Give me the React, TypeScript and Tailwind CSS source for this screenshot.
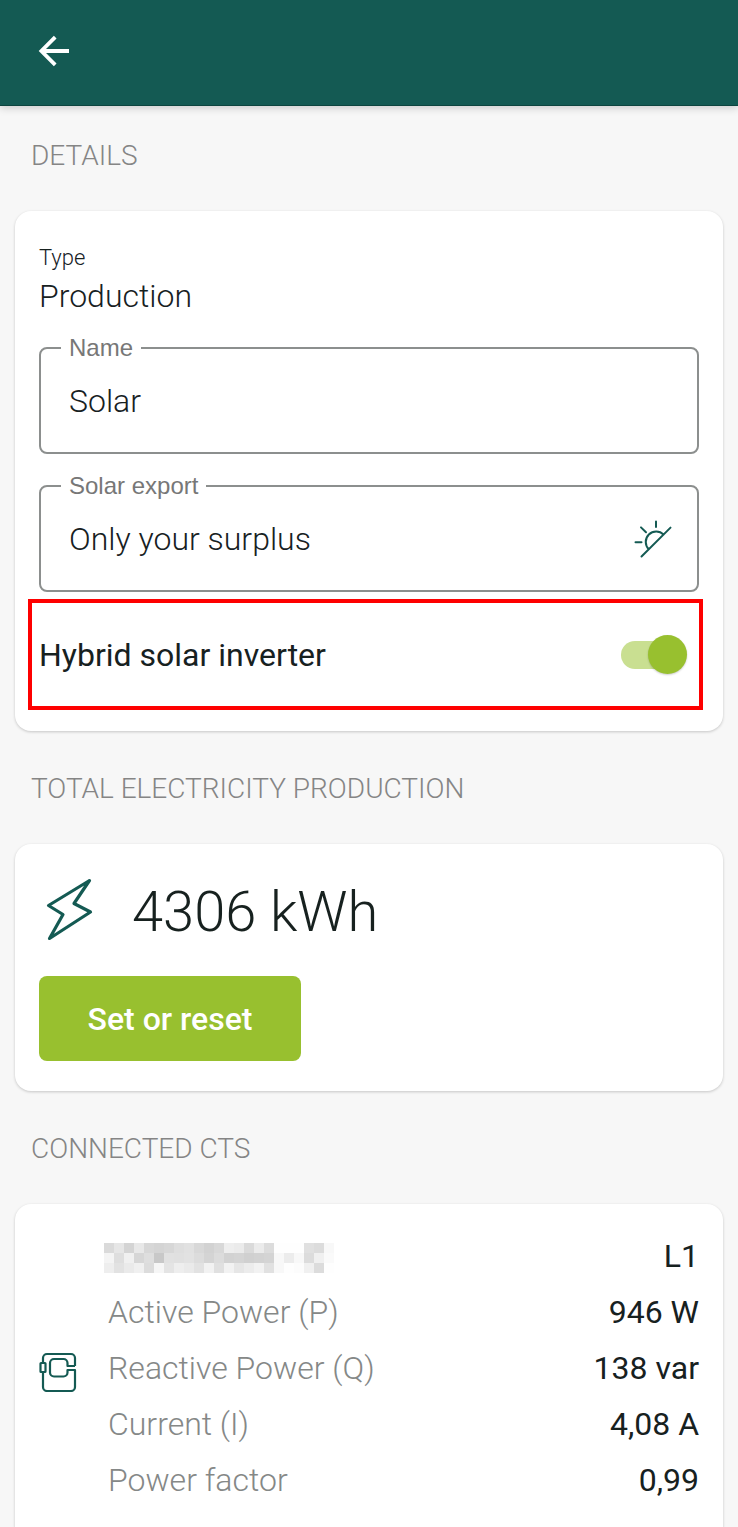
import React, { useState } from 'react';

interface Reading {
    label: string;
    value: string;
}

const readings: Reading[] = [
    { label: 'Active Power (P)', value: '946 W' },
    { label: 'Reactive Power (Q)', value: '138 var' },
    { label: 'Current (I)', value: '4,08 A' },
    { label: 'Power factor', value: '0,99' },
];

// Grey levels of the masked serial number, one row of cells per line
const maskedSerial = [
    [218, 230, 212, 232, 215, 212, 215, 222, 225, 216, 210, 216, 238, 235, 218, 235, 220, 254, 254, 254, 224, 220, 248],
    [244, 222, 240, 214, 222, 200, 225, 224, 226, 220, 212, 220, 210, 212, 208, 210, 212, 248, 236, 248, 220, 240, 250],
    [238, 226, 234, 240, 220, 246, 228, 238, 234, 226, 242, 224, 242, 230, 236, 242, 225, 248, 254, 252, 240, 220, 254],
];

function BackIcon() {
    return (
        <svg className="w-8 h-8" viewBox="0 0 32 32" fill="none" stroke="currentColor" strokeWidth="3.8">
            <path d="M31 16H4M17.2 2.2 3.4 16l13.8 13.8" />
        </svg>
    );
}

function SurplusIcon() {
    return (
        <svg className="w-10 h-10" viewBox="0 0 40 40" fill="none" stroke="currentColor" strokeWidth="2" strokeLinecap="round">
            <path d="M8.5 37.5 37.5 8.6M15.8 30.3A9.8 9.8 0 0 1 30.6 15.6M2.5 23.2h6M8 8.4l5 4.8M23 2.6v5.5" />
        </svg>
    );
}

function BoltIcon() {
    return (
        <svg className="w-12 h-16" viewBox="0 0 48 64" fill="none" stroke="currentColor" strokeWidth="3.2" strokeLinejoin="round">
            <path d="M43.5 2.5 2.5 27.5l14.500 9L3.5 60.5l41-26.5-16.5-8.5z" />
        </svg>
    );
}

function ClampIcon() {
    return (
        <svg className="w-10 h-10" viewBox="0 0 40 40" fill="none" stroke="currentColor" strokeWidth="2.2" strokeLinejoin="round">
            <path d="M36 14V6a4 4 0 0 0-4-4H8a4 4 0 0 0-4 4v4.500M4 20.500V35a4 4 0 0 0 4 4h24a4 4 0 0 0 4-4V18h-7.500v2.500a4 4 0 0 1-4 4H15a4 4 0 0 1-4-4V11a4 4 0 0 1 4-4h9.500a4 4 0 0 1 4 4v3H36" />
            <rect x="1.5" y="11" width="5" height="9" rx="0.5" />
        </svg>
    );
}

function MaskedSerial() {
    return (
        <svg className="w-[230px] h-[30px]" viewBox="0 0 23 3" shapeRendering="crispEdges" role="img">
            {maskedSerial.map((row, y) =>
                row.map((level, x) => (
                    <rect key={`${x}-${y}`} x={x} y={y} width="1" height="1" fill={`rgb(${level},${level},${level})`} />
                ))
            )}
        </svg>
    );
}

function Section({ title, className = '', children }: { title: string; className?: string; children: React.ReactNode }) {
    return (
        <section>
            <h2 className="px-4 pt-px pb-[33px] text-[28px] leading-[44px] font-light text-[#858585] uppercase">{title}</h2>
            <div className={`bg-white shadow-[0_1px_3px_rgba(0,0,0,0.2)] ${className}`}>{children}</div>
        </section>
    );
}

export default function App() {
    const [name, setName] = useState('Solar');
    const [hybrid, setHybrid] = useState(true);

    return (
        <div className="min-h-screen bg-[#f7f7f7] font-['Roboto','Liberation_Sans',sans-serif] text-[#17211f]">
            <header className="flex items-center h-[106px] pl-[38px] pb-1 bg-[#145a53] border-b border-[#0d453f] text-white shadow-[0_2px_8px_rgba(0,0,0,0.18)]">
                <button type="button" aria-label="Back">
                    <BackIcon />
                </button>
            </header>

            <main className="flex flex-col gap-[35px] px-[15px] pt-[27px]">
                <Section title="Details" className="rounded-2xl px-[13px] pt-[31px] pb-[21px]">
                    <div className="px-[11px]">
                        <div className="text-[22px] leading-8 font-light">Type</div>
                        <div className="text-[32px] leading-[44px] font-light">Production</div>

                        <fieldset className="mt-[18px] px-5 pb-[10px] border-2 border-[#8c8f8e] rounded-lg">
                            <legend className="px-2 font-['Liberation_Sans',sans-serif] text-2xl leading-6 text-[#777]">
                                <label htmlFor="name">Name</label>
                            </legend>
                            <input
                                id="name"
                                type="text"
                                value={name}
                                onChange={e => setName(e.target.value)}
                                className="block w-full h-[82px] px-2 text-[32px] font-light outline-none"
                            />
                        </fieldset>

                        <fieldset className="mt-5 px-5 pb-[10px] border-2 border-[#8c8f8e] rounded-lg">
                            <legend className="px-2 font-['Liberation_Sans',sans-serif] text-2xl leading-6 text-[#777]">
                                <label htmlFor="export">Solar export</label>
                            </legend>
                            <div className="flex items-center h-[82px] pr-1 text-[#145a53]">
                                <select id="export" className="flex-1 h-full px-2 appearance-none text-[32px] font-light text-[#17211f] outline-none">
                                    <option>Only your surplus</option>
                                </select>
                                <SurplusIcon />
                            </div>
                        </fieldset>
                    </div>

                    <label className="flex items-center justify-between h-[111px] mt-[7px] mr-[7px] pl-[7px] pr-3 border-4 border-[#fe0000] text-[32px]">
                        Hybrid solar inverter
                        <span className="relative flex items-center w-[66px] h-[39px]">
                            <input
                                type="checkbox"
                                checked={hybrid}
                                onChange={e => setHybrid(e.target.checked)}
                                className="peer sr-only"
                            />
                            <span className="w-[60px] h-7 rounded-full bg-gray-300 peer-checked:bg-[#c9df91]" />
                            <span className="absolute left-0 peer-checked:left-auto peer-checked:right-0 size-[39px] rounded-full bg-gray-400 peer-checked:bg-[#98c02f] shadow-[0_1px_2px_rgba(0,0,0,0.2)]" />
                        </span>
                    </label>
                </Section>

                <Section title="Total electricity production" className="rounded-2xl px-6 pt-[34px] pb-[30px]">
                    <div className="flex items-center gap-[38px] pl-[7px]">
                        <span className="text-[#145a53]"><BoltIcon /></span>
                        <span className="pt-1 text-[56px] leading-[60px] font-light">4306 kWh</span>
                    </div>
                    <button type="button" className="mt-[34px] min-w-[262px] h-[85px] px-10 rounded-lg bg-[#98c02f] text-[32px] font-medium text-white">
                        Set or reset
                    </button>
                </Section>

                <Section title="Connected CTs" className="flex items-center gap-[25px] rounded-t-2xl px-6 pt-6 pb-5">
                    <span className="pt-2 text-[#145a53]"><ClampIcon /></span>
                    <table className="flex-1 text-[32px]">
                        <tbody className="block w-full">
                            <tr className="flex items-center justify-between h-14">
                                <th scope="row" className="pt-1"><MaskedSerial /></th>
                                <td>L1</td>
                            </tr>
                            {readings.map(r => (
                                <tr key={r.label} className="flex items-center justify-between h-14">
                                    <th scope="row" className="pl-1 font-light text-[#858887]">{r.label}</th>
                                    <td>{r.value}</td>
                                </tr>
                            ))}
                        </tbody>
                    </table>
                </Section>
            </main>
        </div>
    );
}
